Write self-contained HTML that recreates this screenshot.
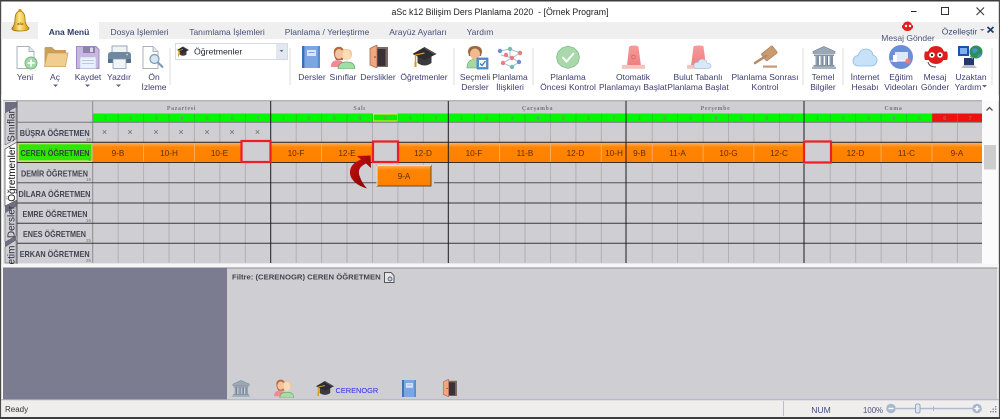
<!DOCTYPE html>
<html lang="tr"><head><meta charset="utf-8"><title>aSc k12 Bilişim Ders Planlama 2020</title>
<style>
html,body{margin:0;padding:0;background:#fff;width:1000px;height:419px;overflow:hidden}
svg{display:block;font-family:"Liberation Sans",sans-serif;filter:blur(.3px)}
.rb text{font-size:8.5px;fill:#3d3d73;text-anchor:middle}
.tab text{font-size:8.5px;fill:#45507a;text-anchor:middle}
.nm text{font-size:8.4px;fill:#333344;text-anchor:middle;font-weight:bold;opacity:.9}
.ct text{font-size:4.5px;fill:#777;text-anchor:end}
.ls text{font-size:8.2px;fill:#5a3000;text-anchor:middle}
</style></head><body>
<svg width="1000" height="419" viewBox="0 0 1000 419" xmlns="http://www.w3.org/2000/svg">
<defs>
<linearGradient id="or" x1="0" y1="0" x2="0" y2="1"><stop offset="0" stop-color="#ffb060"/><stop offset=".22" stop-color="#ff8400"/><stop offset="1" stop-color="#ff8000"/></linearGradient>
<linearGradient id="bell" x1="0" y1="0" x2="1" y2="0"><stop offset="0" stop-color="#c98a00"/><stop offset=".45" stop-color="#ffe98a"/><stop offset="1" stop-color="#d89800"/></linearGradient>
<linearGradient id="sir" x1="0" y1="0" x2="0" y2="1"><stop offset="0" stop-color="#f79a9a"/><stop offset="1" stop-color="#ee7f80"/></linearGradient>
<linearGradient id="arw" x1="0" y1="0" x2="1" y2="1"><stop offset="0" stop-color="#d01010"/><stop offset="1" stop-color="#7d0000"/></linearGradient>
<symbol id="cap" viewBox="0 0 24 22"><path d="M5 10V17Q12 22 19 17V10Z" fill="#3b3b3f"/><path d="M12 1L24 8 12 14 0 8Z" fill="#2b2b30"/><path d="M12 2L22 8" stroke="#5c5c60" fill="none"/><path d="M12 7L3 9V18" stroke="#d89a1e" stroke-width="1.4" fill="none"/><rect x="2" y="16" width="2" height="5" fill="#d89a1e"/></symbol>
<symbol id="book" viewBox="0 0 18 22"><rect x="0" y="0" width="18" height="22" rx="1" fill="#7ba6e2"/><rect x="0" y="0" width="2.4" height="22" fill="#3e6fb5"/><rect x="15.8" y="0" width="2.2" height="22" fill="#5a8ad0"/><rect x="5" y="4" width="9" height="6" fill="#dbe6f5"/><path d="M6.5 6.5H12.5" stroke="#7ba6e2"/></symbol>
<symbol id="door" viewBox="0 0 19 23"><rect x="5" y="2" width="14" height="20" fill="#7e6a64"/><rect x="8" y="4" width="8.5" height="17" fill="#3a3036"/><path d="M1 3.5L8 0V23L1 20Z" fill="#f2a67e"/><path d="M1 3.5L8 0V23L1 20Z" fill="none" stroke="#a46a55" stroke-width=".8"/><circle cx="6" cy="12" r=".8" fill="#6b3d2a"/></symbol>
<symbol id="ppl" viewBox="0 0 24 23"><path d="M3 4Q5 0 10 1Q14 3 13 8L12 14H5Q2 9 3 4Z" fill="#b5693a"/><ellipse cx="8" cy="8" rx="4" ry="5" fill="#f5c3a3"/><path d="M0 19Q1 14 7 14Q12 14 13 19V21H0Z" fill="#f08b92"/><path d="M10 8Q10 3 15.5 3Q21 3 21 8Q21 13 15.5 14.5Q10 13 10 8Z" fill="#f3c888"/><ellipse cx="15.5" cy="9" rx="4" ry="5.3" fill="#fbdcb8"/><path d="M7 23Q7 16 15.5 16Q24 16 24 23Z" fill="#a6dca6" stroke="#5fa26a" stroke-width=".7"/></symbol>
<symbol id="tmp" viewBox="0 0 24 23"><path d="M12 .5L23 5.5V7.5H1V5.5Z" fill="#9aa7b5" stroke="#6f7d8d" stroke-width=".6"/><rect x="2" y="8.5" width="20" height="1.6" fill="#8392a3"/><g fill="#8ea0b1"><rect x="3.5" y="10" width="3.5" height="9"/><rect x="8.5" y="10" width="3" height="9"/><rect x="13" y="10" width="3" height="9"/><rect x="17.5" y="10" width="3.5" height="9"/></g><path d="M6 10.5V19M11 10.5V19M15.5 10.5V19M20 10.5V19" stroke="#5e6c7c" stroke-width=".7"/><rect x="1.5" y="19" width="21" height="1.8" fill="#8493a4"/><rect x="0" y="20.8" width="24" height="2.2" fill="#a5b2bf"/></symbol>
</defs>

<!-- window frame -->
<rect width="1000" height="419" fill="#fff"/>
<rect x="0" y="0" width="1000" height="1.5" fill="#3c3c3c"/>
<rect x="0" y="0" width="1.2" height="419" fill="#4a4a4a"/>
<rect x="998.8" y="0" width="1.2" height="419" fill="#4a4a4a"/>

<!-- title bar -->
<text x="500" y="15" text-anchor="middle" font-size="8.8" fill="#222" xml:space="preserve">aSc k12 Bilişim Ders Planlama 2020  - [Örnek Program]</text>
<path d="M911 11.5H916.5" stroke="#222" stroke-width="1"/>
<rect x="941.5" y="7.5" width="7" height="7" fill="none" stroke="#333" stroke-width="1"/>
<path d="M976.5 7.5L984 15M984 7.5L976.5 15" stroke="#333" stroke-width="1"/>

<!-- tab strip -->
<rect x="1.2" y="22" width="997.6" height="17" fill="#efefef"/>
<rect x="38" y="22" width="61" height="18" fill="#fff"/>
<g class="tab">
<text x="69" y="35" font-weight="bold" style="fill:#2f3a66">Ana Menü</text>
<text x="139.5" y="35">Dosya İşlemleri</text>
<text x="227" y="35">Tanımlama İşlemleri</text>
<text x="327" y="35">Planlama / Yerleştirme</text>
<text x="418" y="35">Arayüz Ayarları</text>
<text x="480" y="35">Yardım</text>
</g>

<!-- bell -->
<path d="M12 28Q15 25 15 19Q15 12 20 11Q25 12 25 19Q25 25 29 28Q29 31 20 31Q11 31 12 28Z" fill="url(#bell)" stroke="#9a6a00" stroke-width=".7"/>
<circle cx="20" cy="10.5" r="1.6" fill="#d89800"/>
<text x="20.5" y="25" font-size="3.5" text-anchor="middle" fill="#8a5800" font-weight="bold">aSc</text>

<!-- message top-right -->
<path d="M903 25Q904 21.5 907.5 21.5Q911 21.5 912 25L913 25.5V28L912 28.5Q911 31 907.5 31Q904 31 903 28.5L902 28V25.5Z" fill="#e02020"/>
<circle cx="906" cy="26" r="1.2" fill="#fff"/><circle cx="910" cy="26" r="1.2" fill="#fff"/>
<text x="908" y="41" font-size="8.5" text-anchor="middle" fill="#4c5680">Mesaj Gönder</text>
<text x="959.5" y="34.5" font-size="8.5" text-anchor="middle" fill="#3e4a78">Özelleştir</text>
<path d="M980 29H984.5L982.25 31Z" fill="#6b7590"/>
<path d="M987.5 27L993.5 32.5M993.5 27L987.5 32.5" stroke="#1f3a6e" stroke-width="1.7"/>

<!-- separators -->
<path d="M170 48V85M290 48V85M454 48V85M533 48V85M803 48V85M843 48V85M992 48V85" stroke="#dcdcdc" stroke-width="1"/>

<!-- ribbon labels -->
<g class="rb">
<text x="25" y="80">Yeni</text>
<text x="55" y="80">Aç</text>
<text x="88" y="80">Kaydet</text>
<text x="119" y="80">Yazdır</text>
<text x="154" y="80">Ön</text><text x="154" y="90">İzleme</text>
<text x="312" y="80">Dersler</text>
<text x="343" y="80">Sınıflar</text>
<text x="378" y="80">Derslikler</text>
<text x="424" y="80">Öğretmenler</text>
<text x="475" y="80">Seçmeli</text><text x="475" y="90">Dersler</text>
<text x="510" y="80">Planlama</text><text x="510" y="90">İlişkileri</text>
<text x="568" y="80">Planlama</text><text x="568" y="90">Öncesi Kontrol</text>
<text x="633" y="80">Otomatik</text><text x="633" y="90">Planlamayı Başlat</text>
<text x="698" y="80">Bulut Tabanlı</text><text x="698" y="90">Planlama Başlat</text>
<text x="765" y="80">Planlama Sonrası</text><text x="765" y="90">Kontrol</text>
<text x="823" y="80">Temel</text><text x="823" y="90">Bilgiler</text>
<text x="865" y="80">İnternet</text><text x="865" y="90">Hesabı</text>
<text x="901" y="80">Eğitim</text><text x="901" y="90">Videoları</text>
<text x="935" y="80">Mesaj</text><text x="935" y="90">Gönder</text>
<text x="971" y="80">Uzaktan</text><text x="968" y="90">Yardım</text>
</g>
<path d="M53 84.5H58L55.5 87ZM85 84.5H90L87.5 87ZM116 84.5H121L118.5 87ZM982 85H987L984.5 87.5Z" fill="#5b6580"/>

<!-- New -->
<path d="M17 46.5H29L34 51.5V68.5H17Z" fill="#fff" stroke="#a9b3bd"/><path d="M29 46.5V51.5H34" fill="#e6e9ec" stroke="#a9b3bd"/>
<circle cx="31" cy="63" r="6" fill="#a5d8a9" stroke="#79b884"/><path d="M31 59.5V66.5M27.5 63H34.5" stroke="#fff" stroke-width="1.8"/>
<!-- Folder -->
<path d="M44.5 66V48.5Q44.5 47 46 47H52L55 50H66V66Z" fill="#c99f5c"/>
<path d="M44.5 66.5L47.5 53H68L65.5 66.5Z" fill="#f1cd8f" stroke="#c99f5c" stroke-width=".7"/>
<!-- Save -->
<path d="M76.5 46.5H96L99 49.5V68.5H76.5Z" fill="#c8b6e0" stroke="#9f8cc0"/>
<rect x="83" y="46.5" width="12" height="6.5" fill="#8b82a5"/><rect x="90" y="47.5" width="3" height="4.5" fill="#dcd6ea"/>
<rect x="80" y="57" width="16" height="11.5" fill="#e9f1fb" stroke="#b9c6de" stroke-width=".6"/>
<path d="M82 60.5H94M82 63.5H94" stroke="#bccbe3"/>
<!-- Print -->
<rect x="112" y="46" width="15" height="7" fill="#eef3f8" stroke="#7d94ae" stroke-width=".8"/>
<path d="M108 55Q108 52 111 52H128Q131 52 131 55V63H108Z" fill="#6f889f"/>
<rect x="108" y="59" width="23" height="4" fill="#55708b"/>
<rect x="113" y="59" width="13" height="9.5" fill="#f2f5f8" stroke="#7d94ae" stroke-width=".7"/>
<circle cx="127" cy="54.5" r=".9" fill="#f4d97d"/>
<!-- Preview -->
<path d="M143 46.5H153L158 51.5V68.5H143Z" fill="#fff" stroke="#a9b3bd"/><path d="M153 46.5V51.5H158" fill="#e6e9ec" stroke="#a9b3bd"/>
<circle cx="154.5" cy="59" r="4.5" fill="#d2e6f6" stroke="#7e97ad" stroke-width="1.2"/><path d="M158 62.5L163 67.5" stroke="#7e97ad" stroke-width="2"/>

<!-- Dropdown -->
<rect x="175.5" y="43.5" width="112" height="16" fill="#fff" stroke="#d4dbe6"/>
<rect x="276" y="44" width="11" height="15" fill="#e3e8f0"/>
<path d="M279.5 50H283.5L281.5 52Z" fill="#5d6a8a"/>
<use href="#cap" x="177" y="46" width="12" height="11"/>
<text x="194" y="54.5" font-size="8.7" fill="#26263a">Öğretmenler</text>

<!-- ribbon icons -->
<use href="#book" x="302" y="46" width="18" height="22"/>
<use href="#ppl" x="331" y="46" width="24" height="23"/>
<use href="#door" x="369" y="45" width="19" height="23"/>
<use href="#cap" x="412" y="46" width="25" height="22"/>
<!-- Secmeli -->
<path d="M467 68Q467 59 476 59Q484 59 484 68Z" fill="#a4d8a4" stroke="#5fa26a" stroke-width=".6"/>
<path d="M468 52Q468 46 475 46Q482 46 482 52L481 56H469Z" fill="#9a6a3d"/><ellipse cx="475" cy="54" rx="5" ry="5.5" fill="#efbc92"/>
<rect x="477" y="58" width="11" height="11" fill="#5c94d8" stroke="#3f75b8" stroke-width=".7"/><rect x="479" y="60" width="7" height="7" fill="#fff"/><path d="M480 63.5L482 65.5L485.5 61" stroke="#3f75b8" fill="none" stroke-width="1.3"/>
<!-- Graph -->
<g stroke="#a9bcd0" stroke-width="1" fill="none"><path d="M500 51L510 49 520 53 512 58 503 63 512 67 519 62 512 58 501 55"/><path d="M510 49V58"/></g>
<g><circle cx="500" cy="51" r="2.2" fill="#6c8fd0"/><circle cx="510" cy="49" r="2.2" fill="#6dbdb0"/><circle cx="520" cy="53" r="2.2" fill="#e57f7f"/><circle cx="512" cy="58" r="2.2" fill="#e57f7f"/><circle cx="503" cy="63" r="2.2" fill="#e57f7f"/><circle cx="512" cy="67" r="2.2" fill="#6dbdb0"/><circle cx="519" cy="62" r="2.2" fill="#6c8fd0"/><circle cx="506" cy="55" r="2.2" fill="#e57f7f"/></g>
<!-- Check -->
<path d="M568 46L574 48 578 52 579.5 57 578 63 574 66.5 568 68.5 562 66.5 558 63 556.5 57 558 52 562 48Z" fill="#a9d9ab" stroke="#80bd8a" stroke-width=".8"/>
<path d="M562.5 57L566.5 61.5 574 53" stroke="#fff" stroke-width="2" fill="none"/>
<!-- Sirens -->
<path d="M627 66L629 47Q629.5 45.5 634 45.5Q638 45.5 638.5 47L641 66Z" fill="url(#sir)"/>
<rect x="622" y="65" width="23" height="3.8" fill="#f2c4bc"/>
<circle cx="633.5" cy="57" r="2.4" fill="#e26e6e"/><circle cx="633.5" cy="57" r="1.1" fill="#f59a9a"/>
<path d="M691 66L693.5 46.5Q694 45.5 699 45.5Q703 45.5 703.5 46.5L706 66Z" fill="url(#sir)"/>
<rect x="687" y="65" width="21" height="3.8" fill="#f2c4bc"/>
<path d="M697 68.5Q693 68.5 694 64.5Q695 62 698 62.5Q699.5 58.5 704 59.5Q707 60.5 707 63Q711.5 63.5 711 66.5Q710.5 68.5 707 68.5Z" fill="#d8e8f7" stroke="#a8c6e4" stroke-width=".7"/>
<!-- Gavel -->
<rect x="762" y="49" width="14" height="9" rx="1" transform="rotate(-38 769 53)" fill="#c99a70" stroke="#a97a55" stroke-width=".6"/>
<path d="M766 56L755 63" stroke="#b58a68" stroke-width="2.5" stroke-linecap="round"/>
<rect x="763" y="65.5" width="14" height="2.2" fill="#c99a70"/>
<!-- Temple -->
<use href="#tmp" x="812" y="46" width="24" height="23"/>
<!-- Cloud -->
<path d="M859 66Q853 66 853 60.5Q853.5 56 858 55.5Q860 49 866.5 49Q872 49.5 873 55Q877.5 56.5 877 61Q876 66 871 66Z" fill="#c7e2f8" stroke="#8fbde4" stroke-width=".8"/>
<!-- Video -->
<circle cx="901" cy="57" r="12" fill="#6c8ed8"/>
<rect x="895" y="52" width="13" height="9" fill="#dfe8f8"/><rect x="893" y="55" width="4" height="7" fill="#fff"/><path d="M890.5 61H906" stroke="#fff" stroke-width="1"/>
<circle cx="908" cy="61" r="2.6" fill="#ee7a7a"/>
<!-- Mascot -->
<path d="M925 51.5H928Q930 46 936 46Q942 46 944 51.5H947Q948.5 56 947 60H943.5Q941 64 936 64Q931 64 928.5 60H925Q923.5 56 925 51.5Z" fill="#e01c1c"/>
<circle cx="932" cy="55" r="2.8" fill="#fff"/><circle cx="940" cy="55" r="2.8" fill="#fff"/>
<circle cx="932" cy="55" r="1.1" fill="#222"/><circle cx="940" cy="55" r="1.1" fill="#222"/>
<path d="M928 62Q929 67 936 67" stroke="#444" stroke-width=".9" fill="none"/>
<!-- Remote -->
<rect x="958" y="46" width="11" height="10" fill="#1f4fb0"/><rect x="960" y="48" width="7" height="6" fill="#7fb0f0"/>
<circle cx="976" cy="52" r="6.5" fill="#2e8e57"/><path d="M972 49Q976 47 978 50Q975 54 973 53ZM978 55Q981 54 982 52Q981 57 977 58Z" fill="#4a90d8"/>
<rect x="964" y="58" width="10" height="7" fill="#26386a"/><path d="M961 68L964 65H974L977 68Z" fill="#b8bfc9"/><path d="M970 56L973 59" stroke="#5a9" stroke-width="1"/>

<!-- GRID -->
<rect x="1.2" y="95" width="997.6" height="6" fill="#fff"/>
<rect x="3" y="100.5" width="979" height="163" fill="#cfced3"/>
<path d="M3 100.8H982" stroke="#9a9a9e" stroke-width="1"/>

<!-- left tabs -->
<rect x="3" y="101" width="14" height="163" fill="#e4e4e8"/>
<path d="M5 102H17V107L5 113Z" fill="#6e6e82"/>
<path d="M5 113L16 107V139L5 145Z" fill="#cfced3" stroke="#55555f" stroke-width=".5"/>
<path d="M5 206V149L17 142V200Z" fill="#fff" stroke="#333" stroke-width=".6"/>
<path d="M5 206L17 200V206L5 213Z" fill="#6e6e82"/>
<path d="M5 213L16 206V236L5 242Z" fill="#cfced3" stroke="#55555f" stroke-width=".5"/>
<path d="M5 242L16 236V240L5 247Z" fill="#6e6e82"/>
<path d="M5 247L16 240V263H5Z" fill="#cfced3" stroke="#55555f" stroke-width=".5"/>
<g font-size="10" fill="#2a2a3a" text-anchor="middle">
<text transform="translate(14.5 126) rotate(-90)">Sınıflar</text>
<text transform="translate(15 174) rotate(-90)" fill="#111">Öğretmenler</text>
<text transform="translate(14.5 222) rotate(-90)">Dersler</text>
<text transform="translate(14.5 255) rotate(-90)">etim</text>
</g>
<path d="M17 100.5V264" stroke="#5c5c66" stroke-width="1"/>

<!-- day names -->
<g font-family="'Liberation Serif',serif" font-size="5.8" font-weight="bold" fill="#77777b" text-anchor="middle" letter-spacing=".7">
<text x="181.5" y="110">Pazartesi</text><text x="359.5" y="110">Salı</text><text x="537.5" y="110">Çarşamba</text><text x="715.5" y="110">Perşembe</text><text x="893.5" y="110">Cuma</text>
</g>
<!-- period bar -->
<rect x="92.7" y="113.5" width="889.3" height="8.5" fill="#00f800"/>
<rect x="932" y="113.5" width="50" height="8.5" fill="#f01010"/>
<rect x="373.5" y="114" width="24" height="7" fill="#12ec00" stroke="#f2e840" stroke-width="1"/>
<path d="M118.1 113.5V122M143.6 113.5V122M169 113.5V122M194.4 113.5V122M219.9 113.5V122M245.3 113.5V122M296.2 113.5V122M321.6 113.5V122M347 113.5V122M372.5 113.5V122M397.9 113.5V122M423.3 113.5V122M474.2 113.5V122M499.6 113.5V122M525 113.5V122M550.5 113.5V122M575.9 113.5V122M601.3 113.5V122M652.2 113.5V122M677.6 113.5V122M703.1 113.5V122M728.5 113.5V122M753.9 113.5V122M779.4 113.5V122M830.2 113.5V122M855.7 113.5V122M881.1 113.5V122M906.5 113.5V122M932 113.5V122M957.4 113.5V122" stroke="#3ca83c" stroke-width=".6"/>
<g font-size="5.8" font-weight="bold" fill="#60a060" text-anchor="middle">
<text x="105.4 130.8 156.3 181.7 207.1 232.6 258" y="120">1234567</text>
<text x="283.4 308.9 334.3 359.7 385.2 410.6 436" y="120">1234567</text>
<text x="461.5 486.9 512.3 537.8 563.2 588.6 614.1" y="120">1234567</text>
<text x="639.5 664.9 690.4 715.8 741.2 766.7 792.1" y="120">1234567</text>
<text x="817.5 843 868.4 893.8 919.3" y="120">12345</text>
<text x="944.7 970.1" y="120" fill="#b06060">67</text>
</g>
<!-- period lines -->
<path d="M118.1 122V263M143.6 122V263M169 122V263M194.4 122V263M219.9 122V263M245.3 122V263M296.2 122V263M321.6 122V263M347 122V263M372.5 122V263M397.9 122V263M423.3 122V263M474.2 122V263M499.6 122V263M525 122V263M550.5 122V263M575.9 122V263M601.3 122V263M652.2 122V263M677.6 122V263M703.1 122V263M728.5 122V263M753.9 122V263M779.4 122V263M830.2 122V263M855.7 122V263M881.1 122V263M906.5 122V263M932 122V263M957.4 122V263" stroke="#aeaeb0" stroke-width=".9"/>
<path d="M92.7 101V263" stroke="#8a8a90" stroke-width="1"/>
<!-- rows -->
<path d="M17 122.3H982" stroke="#77777c" stroke-width="1"/>
<path d="M17 182.7H982" stroke="#55555a" stroke-width="1"/>
<path d="M17 203H982M17 223.2H982M17 243.3H982" stroke="#38383c" stroke-width="1"/>
<!-- × -->
<g font-size="9" fill="#66666c" text-anchor="middle"><text x="104.5 130 156 181 207 232 257.5" y="135">×××××××</text></g>
<!-- orange row -->
<rect x="92.7" y="143" width="889.3" height="19" fill="url(#or)"/>
<path d="M17 142.3H982M17 162.5H982" stroke="#3a3026" stroke-width="1.1"/>
<path d="M143.6 143.5V162M194.4 143.5V162M321.6 143.5V162M499.6 143.5V162M550.5 143.5V162M601.3 143.5V162M652.2 143.5V162M703.1 143.5V162M753.9 143.5V162M881.1 143.5V162M932 143.5V162" stroke="#ffb066" stroke-width=".9"/>
<g class="ls">
<text x="118" y="156">9-B</text><text x="169" y="156">10-H</text><text x="219.5" y="156">10-E</text>
<text x="296" y="156">10-F</text><text x="347" y="156">12-E</text><text x="423" y="156">12-D</text>
<text x="474" y="156">10-F</text><text x="525" y="156">11-B</text><text x="575.5" y="156">12-D</text><text x="614" y="156">10-H</text>
<text x="639.5" y="156">9-B</text><text x="677.5" y="156">11-A</text><text x="728.5" y="156">10-G</text><text x="779" y="156">12-C</text>
<text x="855.5" y="156">12-D</text><text x="906.5" y="156">11-C</text><text x="957" y="156">9-A</text>
</g>
<!-- empty red boxes -->
<g fill="#cfced3" stroke="#ee1c24" stroke-width="2.2">
<rect x="241.5" y="141" width="29" height="21"/>
<rect x="373" y="141.5" width="25" height="20.5"/>
<rect x="804" y="141.5" width="27" height="21"/>
</g>
<!-- day lines -->
<path d="M270.7 122V140M270.7 163V263M448.3 101V263M626 101V263M804 101V140M804 164V263M270.7 101V122" stroke="#1c1c20" stroke-width="1"/>

<!-- names -->
<rect x="18.5" y="143.8" width="73.5" height="17" fill="#2fe600" stroke="#c8e070" stroke-width="1"/>
<g class="nm">
<text x="54.7" y="136" textLength="70" lengthAdjust="spacingAndGlyphs">BÜŞRA ÖĞRETMEN</text>
<text x="55" y="156" textLength="69" lengthAdjust="spacingAndGlyphs">CEREN ÖĞRETMEN</text>
<text x="54.5" y="176.5" textLength="67" lengthAdjust="spacingAndGlyphs">DEMİR ÖĞRETMEN</text>
<text x="54.5" y="197" textLength="72" lengthAdjust="spacingAndGlyphs">DİLARA ÖĞRETMEN</text>
<text x="55" y="217" textLength="65" lengthAdjust="spacingAndGlyphs">EMRE ÖĞRETMEN</text>
<text x="54.5" y="237" textLength="63" lengthAdjust="spacingAndGlyphs">ENES ÖĞRETMEN</text>
<text x="54.7" y="257" textLength="70" lengthAdjust="spacingAndGlyphs">ERKAN ÖĞRETMEN</text>
</g>
<g class="ct">
<text x="91" y="141">16</text><text x="91" y="161">1</text><text x="91" y="181">15</text><text x="91" y="202">7</text><text x="91" y="222">16</text><text x="91" y="242">25</text><text x="91" y="262">26</text>
</g>

<!-- dragged card -->
<rect x="429" y="167" width="4" height="20" fill="#cfced3"/>
<path d="M431 182.7H434" stroke="#cfced3" stroke-width="2"/>
<rect x="377" y="165.5" width="54" height="20.5" fill="url(#or)" stroke="#6d4a26" stroke-width="1"/>
<path d="M377 165.5H431M377 165.5V186" stroke="#e8dccc" stroke-width="1"/>
<g class="ls"><text x="404" y="179">9-A</text></g>
<path d="M370.5 155.5L371 168 366 163.5Q356 168 360 177Q362 183 367 188.5Q352 184 350 174Q349 164 361 159.5L357 156Z" fill="url(#arw)"/>

<!-- scrollbar -->
<rect x="982" y="101" width="16" height="163" fill="#fbfbfb"/>
<rect x="984" y="145" width="12" height="24.5" fill="#cdcdcd"/>
<path d="M986.5 110.5L989.5 107.5 992.5 110.5" stroke="#555" stroke-width="1.3" fill="none"/>

<!-- lower panes -->
<rect x="1.2" y="264" width="997.6" height="4" fill="#f6f6f6"/>
<rect x="3" y="267.5" width="224" height="132" fill="#7c7c91"/>
<rect x="227" y="268" width="770.5" height="131.5" fill="#cfced3"/>
<path d="M227 268H997.5" stroke="#8e8e94" stroke-width="1"/>
<text x="232" y="279.5" font-size="7.7" font-weight="bold" fill="#444450">Filtre: (CERENOGR) CEREN ÖĞRETMEN</text>
<path d="M384.5 272.5H391L394 275.5V282.5H384.5Z" fill="#e6e6e8" stroke="#333" stroke-width=".8"/>
<circle cx="390" cy="279" r="2" fill="#bcd8ee" stroke="#335" stroke-width=".7"/>
<use href="#tmp" x="232" y="380" width="18" height="17"/>
<use href="#ppl" x="274" y="379" width="20" height="19"/>
<use href="#cap" x="316" y="380" width="18" height="17"/>
<text x="335.5" y="393" font-size="7.4" fill="#2a2af0">CERENOGR</text>
<use href="#book" x="402" y="380" width="14" height="17"/>
<use href="#door" x="442.5" y="379" width="14.5" height="18"/>

<!-- status bar -->
<rect x="1.2" y="399.5" width="997.6" height="17.5" fill="#f0eded"/>
<path d="M1.2 399.8H998.8" stroke="#a6b2cc" stroke-width="1"/>
<path d="M783.5 401V416" stroke="#b6c0d4" stroke-width="1"/>
<rect x="0" y="417" width="1000" height="2" fill="#3c3c3c"/>
<text x="5" y="412" font-size="8" fill="#333">Ready</text>
<text x="821" y="413" font-size="8.6" text-anchor="middle" fill="#46517e">NUM</text>
<text x="873" y="413" font-size="7.8" text-anchor="middle" fill="#46517e">100%</text>
<path d="M896 408.5H974" stroke="#aebbd4" stroke-width="1.4"/>
<path d="M933.5 406V411" stroke="#aebbd4" stroke-width="1"/>
<circle cx="891" cy="408.5" r="4.8" fill="#a8b6d0"/><path d="M888.5 408.5H893.5" stroke="#fff" stroke-width="1.5"/>
<circle cx="977" cy="408.5" r="4.8" fill="#a8b6d0"/><path d="M974.5 408.5H979.5M977 406V411" stroke="#fff" stroke-width="1.5"/>
<rect x="915.5" y="404" width="4.5" height="9" rx="1.5" fill="#dfe5f0" stroke="#8797b8" stroke-width=".8"/>
<g fill="#7c8aa8"><rect x="995" y="406" width="1.4" height="1.4"/><rect x="992.5" y="408.5" width="1.4" height="1.4"/><rect x="995" y="408.5" width="1.4" height="1.4"/><rect x="990" y="411" width="1.4" height="1.4"/><rect x="992.5" y="411" width="1.4" height="1.4"/><rect x="995" y="411" width="1.4" height="1.4"/></g>
</svg>
</body></html>
